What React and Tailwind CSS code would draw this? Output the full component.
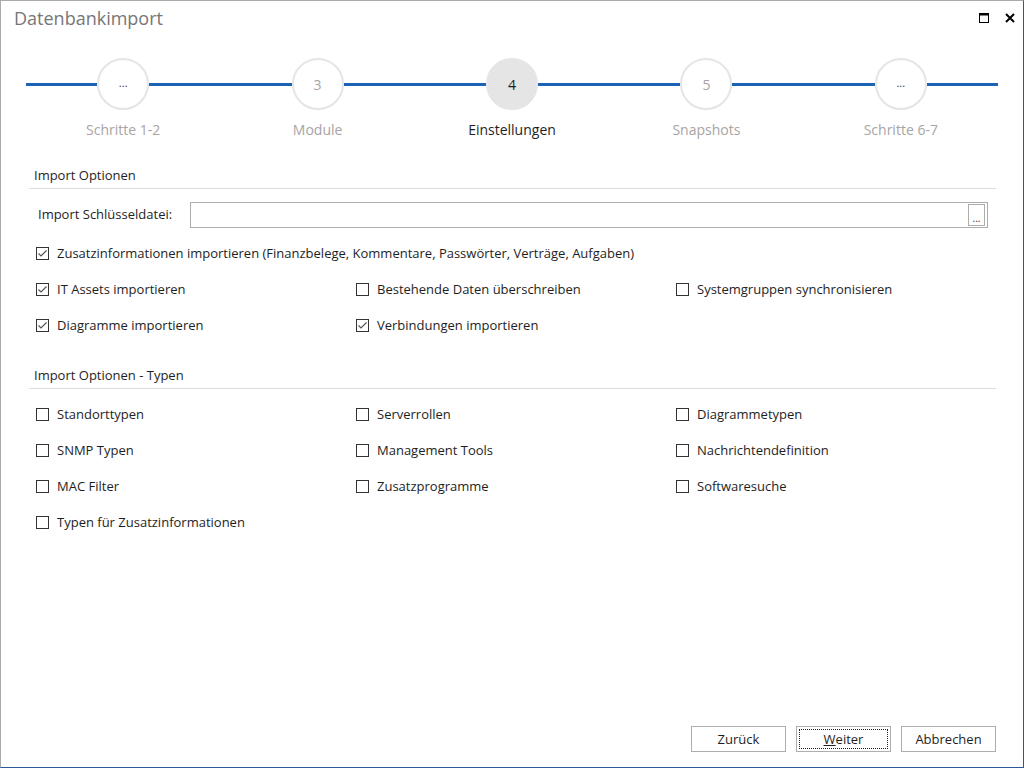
import { Fragment } from "react";

const steps = [
  { n: "...", label: "Schritte 1-2" },
  { n: "3", label: "Module" },
  { n: "4", label: "Einstellungen", active: true },
  { n: "5", label: "Snapshots" },
  { n: "...", label: "Schritte 6-7" },
];

const optionRows = [
  [
    { label: "IT Assets importieren", checked: true },
    { label: "Bestehende Daten überschreiben" },
    { label: "Systemgruppen synchronisieren" },
  ],
  [
    { label: "Diagramme importieren", checked: true },
    { label: "Verbindungen importieren", checked: true },
  ],
];

const typeRows = [
  ["Standorttypen", "Serverrollen", "Diagrammetypen"],
  ["SNMP Typen", "Management Tools", "Nachrichtendefinition"],
  ["MAC Filter", "Zusatzprogramme", "Softwaresuche"],
  ["Typen für Zusatzinformationen"],
];

const Check = ({ checked, label }) => (
  <div className="flex items-center gap-[8px] h-[36px]">
    <span className="w-[13px] h-[13px] border border-[#333] bg-white flex items-center justify-center shrink-0">
      {checked && (
        <svg width="11" height="11" viewBox="0 0 11 11">
          <polyline points="1.5,5.5 4,8 9.5,2.5" fill="none" stroke="#555" strokeWidth="1.2" />
        </svg>
      )}
    </span>
    <span className="text-[13px] text-[#1e1e1e] leading-[18px] whitespace-nowrap">{label}</span>
  </div>
);

const Header = ({ children }) => (
  <div className="pl-[5px] pb-[4px] border-b border-[#dcdcdc] text-[13px] leading-[18px] text-[#1e1e1e]">
    {children}
  </div>
);

const Btn = ({ children, focus }) =>
  focus ? (
    <button className="w-[95px] h-[26px] border border-[#adadad] bg-white p-[2px]">
      <div className="h-full border border-dotted border-[#222] flex items-center justify-center pt-[2px] text-[13px] text-[#1e1e1e]">
        {children}
      </div>
    </button>
  ) : (
    <button className="w-[95px] h-[26px] border border-[#adadad] bg-white flex items-center justify-center pt-[2px] text-[13px] text-[#1e1e1e]">
      {children}
    </button>
  );

export default function App() {
  return (
    <div
      className="w-[1024px] h-[768px] flex flex-col bg-white border border-t-[#aaaaaa] border-l-[#aaaaaa] border-r-[#2b579a] border-b-[#2b579a] overflow-hidden"
      style={{ fontFamily: '"Open Sans", "Noto Sans", sans-serif' }}
    >
      <div className="h-[33px] flex items-center justify-between pl-[13px] pr-[8px]">
        <span className="text-[18px] text-[#767676] leading-none">Datenbankimport</span>
        <div className="flex items-center gap-[16px] pt-[1px]">
          <svg width="10" height="10" viewBox="0 0 10 10">
            <rect x="0.5" y="0.5" width="9" height="9" fill="none" stroke="#000" strokeWidth="1" />
            <rect x="0" y="0" width="10" height="2.5" fill="#000" />
          </svg>
          <svg width="10" height="10" viewBox="0 0 10 10">
            <path d="M1 1 L9 9 M9 1 L1 9" stroke="#000" strokeWidth="2" />
          </svg>
        </div>
      </div>

      <div className="mx-[25px] mt-[24px] grid grid-cols-5">
        {steps.map((s, i) => (
          <div key={i} className="flex flex-col items-center">
            <div className="w-full flex items-center">
              <div className="flex-1 h-[3px] bg-[#1b63b4]" />
              <div
                className={
                  "w-[52px] h-[52px] rounded-full border-2 border-[#e5e5e5] flex items-center justify-center text-[14px] " +
                  (s.active ? "bg-[#e5e5e5] text-[#1e1e1e]" : "bg-white text-[#a8a4a4]")
                }
              >
                {s.n === "..." ? <span className="text-[11px] text-[#333] -mt-[2px]">...</span> : s.n}
              </div>
              <div className="flex-1 h-[3px] bg-[#1b63b4]" />
            </div>
            <div
              className={
                "mt-[10px] text-[14px] leading-[20px] " +
                (s.active ? "text-[#1e1e1e]" : "text-[#a8a4a4]")
              }
            >
              {s.label}
            </div>
          </div>
        ))}
      </div>

      <div className="ml-[28px] mr-[27px] mt-[26px] flex flex-col">
        <Header>Import Optionen</Header>

        <div className="mt-[13px] flex items-center h-[26px]">
          <div className="w-[161px] pl-[9px] text-[13px] text-[#1e1e1e]">Import Schlüsseldatei:</div>
          <div className="flex-1 mr-[8px] h-[26px] border border-[#adadad] flex items-center justify-end pr-[2px]">
            <div className="w-[17px] h-[22px] border border-[#adadad] flex items-end justify-center pb-[2px] text-[10px] leading-none text-[#333]">
              ...
            </div>
          </div>
        </div>

        <div className="mt-[7px] pl-[7px] flex flex-col">
          <Check checked label="Zusatzinformationen importieren (Finanzbelege, Kommentare, Passwörter, Verträge, Aufgaben)" />
          {optionRows.map((row, i) => (
            <div key={i} className="grid grid-cols-[320px_320px_1fr]">
              {row.map((c, j) => (
                <Check key={j} checked={c.checked} label={c.label} />
              ))}
            </div>
          ))}
        </div>

        <div className="mt-[23px]">
          <Header>Import Optionen - Typen</Header>
        </div>

        <div className="mt-[7px] pl-[7px] flex flex-col">
          {typeRows.map((row, i) => (
            <div key={i} className="grid grid-cols-[320px_320px_1fr]">
              {row.map((c, j) => (
                <Check key={j} label={c} />
              ))}
            </div>
          ))}
        </div>
      </div>

      <div className="flex-1" />

      <div className="flex justify-end gap-[10px] mr-[27px] mb-[15px]">
        <Btn>Zurück</Btn>
        <Btn focus>
          <span>
            <span className="underline">W</span>eiter
          </span>
        </Btn>
        <Btn>Abbrechen</Btn>
      </div>
    </div>
  );
}
